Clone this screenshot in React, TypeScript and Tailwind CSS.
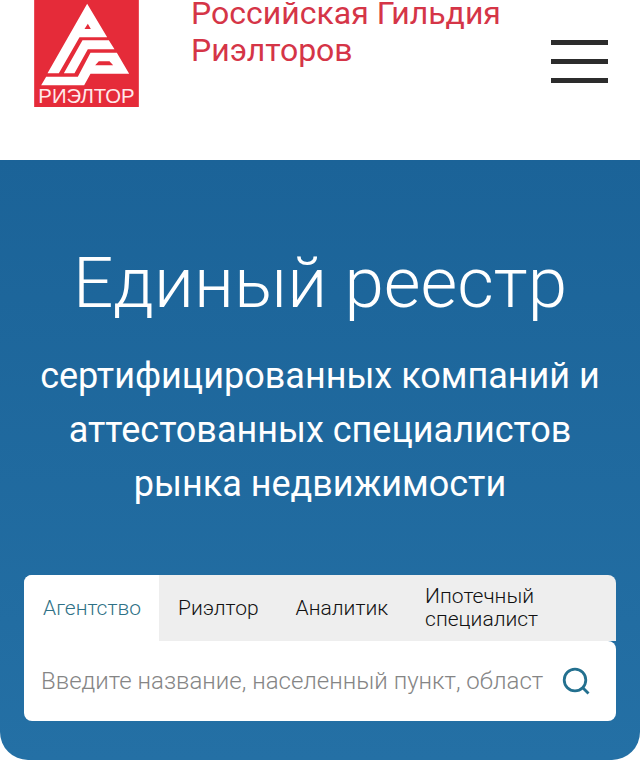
import { useState } from "react";

const tabs = ["Агентство", "Риэлтор", "Аналитик", "Ипотечный специалист"];

function Logo() {
  return (
    <svg className="h-[107px] w-[105px] shrink-0" viewBox="44 0 314 321" role="img" aria-label="Риэлтор">
      <rect x="44" y="0" width="314" height="321" fill="#e52b39" />
      <g fill="#fff" fillRule="evenodd">
        <path d="M203 11 L263 112 H180 L118 220 H84 Z M205 71 L195 87 H214 Z" />
        <path d="M189 121 H268 L285 148 H205 L165 220 H133 Z" />
        <path d="M213 158 H292 L329 221 H213 L194 256 H65 L80 230 H175 Z M238 184 L227 196 H281 L270 184 Z" />
      </g>
      <text x="201" y="308" textAnchor="middle" fill="#ffe9ea" fontSize="61" fontFamily="'Liberation Sans', sans-serif">
        РИЭЛТОР
      </text>
    </svg>
  );
}

export default function App() {
  const [active, setActive] = useState(0);
  return (
    <div className="overflow-hidden rounded-b-[28px] bg-white font-['Roboto','Noto_Sans',sans-serif]">
      <header className="flex h-40 items-start pr-8 pl-[34px]">
        <Logo />
        <p className="-mt-[5px] ml-[52px] max-w-80 flex-1 text-[32px] leading-[37px] text-[#d53547]">
          Российская Гильдия Риэлторов
        </p>
        <button type="button" aria-label="Меню" className="mt-10 ml-auto flex w-[57px] flex-col gap-[14px]">
          <span className="h-[5px] bg-[#2c2c2c]" />
          <span className="h-[5px] bg-[#2c2c2c]" />
          <span className="h-[5px] bg-[#2c2c2c]" />
        </button>
      </header>
      <main className="bg-linear-to-b from-[#1b6398] to-[#2470a5] px-6 pt-[81px] pb-[39px] text-white">
        <h1 className="text-center text-[71px] leading-[84px] font-light">Единый реестр</h1>
        <p className="mt-6 text-center text-[36px] leading-[54px]">
          сертифицированных компаний и аттестованных специалистов рынка недвижимости
        </p>
        <form className="mt-16" onSubmit={(e) => e.preventDefault()}>
          <div role="tablist" className="flex h-[66px] overflow-hidden rounded-t-lg bg-[#eeeeee]">
            {tabs.map((tab, i) => (
              <button
                key={tab}
                type="button"
                role="tab"
                aria-selected={i === active}
                onClick={() => setActive(i)}
                className={
                  "pr-[18px] pl-[19px] text-left text-[21px] leading-[23px] font-light " +
                  (i === active ? "bg-white text-[#2f7186]" : "text-[#111111]") +
                  (i === 3 ? " flex-1 pr-16" : "")
                }
              >
                {tab}
              </button>
            ))}
          </div>
          <div className="flex h-20 items-center rounded-b-lg rounded-tr-lg bg-white pr-[26px] pl-[17px]">
            <input
              type="text"
              aria-label="Поиск по реестру"
              placeholder="Введите название, населенный пункт, област"
              className="min-w-0 flex-1 text-[24px] leading-8 font-light text-[#333333] outline-none placeholder:text-[#858585]"
            />
            <button type="submit" aria-label="Найти" className="ml-[10px]">
              <svg className="size-7" viewBox="0 0 28 28" fill="none" stroke="#23708f" strokeWidth="2.8">
                <circle cx="13" cy="13" r="10.8" />
                <path d="M20.5 20.5 L26.5 26.5" />
              </svg>
            </button>
          </div>
        </form>
      </main>
    </div>
  );
}
